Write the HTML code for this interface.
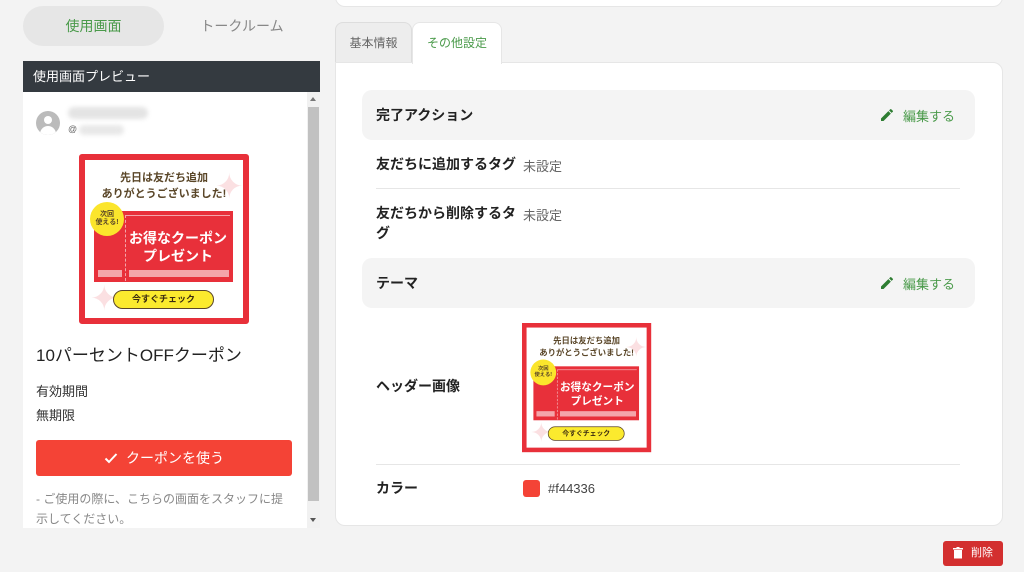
<!DOCTYPE html>
<html><head><meta charset="utf-8">
<style>
*{box-sizing:border-box;margin:0;padding:0}
body{width:1024px;height:572px;overflow:hidden;background:#f3f3f3;font-family:"Liberation Sans","Noto Sans CJK JP",sans-serif;color:#333;position:relative}
.abs{position:absolute}
.cp{position:absolute;width:170px;height:170px;background:#fff;border:6px solid #e8303a;border-radius:3px;overflow:hidden;transform-origin:0 0}
.cp .t{position:absolute;left:0;width:158px;text-align:center;font-weight:bold;color:#5a4628;font-size:11px;line-height:13px}
.cp .band{position:absolute;left:9px;top:51px;width:139px;height:71px;background:#e8303a}
.cp .big{position:absolute;left:38px;width:110px;text-align:center;color:#fff;font-weight:bold;font-size:14px;line-height:16px}
.cp .strip{position:absolute;top:110px;height:7px;background:#f4a5aa}
.cp .btn{position:absolute;left:28px;top:130px;width:101px;height:19px;background:#fbea2e;border:1.5px solid #5a4628;border-radius:10px;text-align:center;font-size:9px;font-weight:bold;line-height:16px;color:#3a2a10}
.cp .badge{position:absolute;left:5px;top:42px;width:34px;height:34px;background:#fbe52c;border-radius:50%;font-size:7px;line-height:8px;text-align:center;font-weight:bold;color:#5a4628;padding-top:9px}
.cp .sp{position:absolute;color:#fbe0e2;font-size:34px;line-height:34px}
.sec{position:absolute;left:362px;width:613px;height:50px;background:#f4f4f4;border-radius:10px}
.sec b{position:absolute;left:14px;top:15px;font-size:14px;color:#222}
.edit{position:absolute;right:20px;top:16px;font-size:13px;color:#4a9a4a}
.edit svg{position:absolute;left:-24px;top:1px}
.lbl{position:absolute;font-size:14px;font-weight:bold;color:#222;line-height:20px}
.val{position:absolute;font-size:13px;color:#666}
</style></head><body>

<div class="abs" style="left:23px;top:6px;width:141px;height:40px;background:#e6e6e6;border-radius:20px;text-align:center;line-height:40px;font-size:14px;color:#4a9a4a">使用画面</div>
<div class="abs" style="left:164px;top:6px;width:156px;height:40px;text-align:center;line-height:40px;font-size:14px;color:#888">トークルーム</div>

<div class="abs" style="left:23px;top:61px;width:297px;height:31px;background:#343a40;color:#fff;font-size:13px;line-height:31px;padding-left:10px">使用画面プレビュー</div>
<div class="abs" style="left:23px;top:92px;width:297px;height:436px;background:#fff;overflow:hidden">
  <div class="abs" style="left:284px;top:0;width:13px;height:436px;background:#f1f1f1"></div>
  <div class="abs" style="left:285px;top:15px;width:11px;height:394px;background:#c1c1c1"></div>
  <div class="abs" style="left:287px;top:5px;width:0;height:0;border-left:3px solid transparent;border-right:3px solid transparent;border-bottom:4px solid #777"></div>
  <div class="abs" style="left:287px;top:426px;width:0;height:0;border-left:3px solid transparent;border-right:3px solid transparent;border-top:4px solid #555"></div>
  <div class="abs" style="left:13px;top:19px;width:24px;height:24px;border-radius:50%;background:#bbb;overflow:hidden">
    <div class="abs" style="left:8px;top:5px;width:8px;height:8px;border-radius:50%;background:#fff"></div>
    <div class="abs" style="left:4px;top:15px;width:16px;height:10px;border-radius:8px 8px 0 0;background:#fff"></div>
  </div>
  <div class="abs" style="left:45px;top:15px;width:80px;height:12px;border-radius:6px;background:#e4e4e4;filter:blur(2px)"></div>
  <div class="abs" style="left:45px;top:32px;font-size:9px;color:#666">@</div>
  <div class="abs" style="left:56px;top:33px;width:45px;height:10px;border-radius:5px;background:#e8e8e8;filter:blur(2px)"></div>
  <div class="abs" style="left:13px;top:249px;font-size:17px;color:#222">10パーセントOFFクーポン</div>
  <div class="abs" style="left:13px;top:289px;font-size:13px;color:#333">有効期間</div>
  <div class="abs" style="left:13px;top:313px;font-size:13px;color:#333">無期限</div>
  <div class="abs" style="left:13px;top:348px;width:256px;height:36px;background:#f44336;border-radius:3px;color:#fff;font-size:14px;text-align:center;line-height:36px">
    <svg width="14" height="12" viewBox="0 0 14 12" style="vertical-align:-1px;margin-right:8px"><path d="M1.5 6.5l3.5 3.5 7.5-8" stroke="#fff" stroke-width="2" fill="none"/></svg>クーポンを使う</div>
  <div class="abs" style="left:13px;top:397px;width:252px;font-size:12px;color:#888;line-height:20px">- ご使用の際に、こちらの画面をスタッフに提示してください。</div>
</div>

<div class="cp" style="left:79px;top:154px">
  <div class="sp" style="left:130px;top:10px">✦</div>
  <div class="sp" style="left:5px;top:122px">✦</div>
  <div class="t" style="top:12px">先日は友だち追加</div>
  <div class="t" style="top:28px">ありがとうございました!</div>
  <div class="band"></div>
  <div class="abs" style="left:41px;top:55px;width:104px;height:1px;background:#f4a5aa"></div>
  <div class="abs" style="left:40px;top:55px;width:0;height:66px;border-left:1px dashed #f4a5aa"></div>
  <div class="big" style="top:70px">お得なクーポン</div>
  <div class="big" style="top:88px">プレゼント</div>
  <div class="strip" style="left:13px;width:24px"></div>
  <div class="strip" style="left:44px;width:100px"></div>
  <div class="badge">次回<br>使える!</div>
  <div class="btn">今すぐチェック</div>
</div>

<div class="abs" style="left:335px;top:-10px;width:668px;height:17px;background:#fff;border-radius:0 0 10px 10px;border:1px solid #e6e6e6"></div>
<div class="abs" style="left:335px;top:22px;width:77px;height:42px;background:#ededed;border:1px solid #ddd;border-radius:8px 8px 0 0;text-align:center;line-height:40px;font-size:12px;color:#666">基本情報</div>
<div class="abs" style="left:335px;top:62px;width:668px;height:464px;background:#fff;border:1px solid #e6e6e6;border-radius:0 10px 10px 10px"></div>
<div class="abs" style="left:412px;top:22px;width:90px;height:42px;background:#fff;border:1px solid #e6e6e6;border-bottom:none;border-radius:8px 8px 0 0;text-align:center;line-height:40px;font-size:12px;color:#4a9a4a">その他設定</div>

<div class="sec" style="top:90px"><b>完了アクション</b><div class="edit"><svg width="16" height="16" viewBox="0 0 24 24"><path d="M3 17.25V21h3.75L17.8 9.94l-3.750-3.75L3 17.25zM20.7 7.04a1 1 0 000-1.41l-2.34-2.34a1 1 0 00-1.41 0l-1.83 1.83 3.75 3.75 1.83-1.83z" fill="#2e7d32"/></svg>編集する</div></div>
<div class="lbl" style="left:376px;top:154px">友だちに追加するタグ</div>
<div class="val" style="left:523px;top:156px">未設定</div>
<div class="abs" style="left:376px;top:188px;width:584px;height:1px;background:#e6e6e6"></div>
<div class="lbl" style="left:376px;top:203px;width:140px">友だちから削除するタグ</div>
<div class="val" style="left:523px;top:205px">未設定</div>

<div class="sec" style="top:258px"><b>テーマ</b><div class="edit"><svg width="16" height="16" viewBox="0 0 24 24"><path d="M3 17.25V21h3.75L17.8 9.94l-3.75-3.75L3 17.25zM20.7 7.04a1 1 0 000-1.41l-2.34-2.34a1 1 0 00-1.41 0l-1.83 1.83 3.75 3.75 1.83-1.83z" fill="#2e7d32"/></svg>編集する</div></div>
<div class="lbl" style="left:376px;top:376px">ヘッダー画像</div>

<div class="cp" style="left:522px;top:323px;transform:scale(0.76);border-radius:0">
  <div class="sp" style="left:130px;top:10px">✦</div>
  <div class="sp" style="left:5px;top:122px">✦</div>
  <div class="t" style="top:12px">先日は友だち追加</div>
  <div class="t" style="top:28px">ありがとうございました!</div>
  <div class="band"></div>
  <div class="abs" style="left:41px;top:55px;width:104px;height:1px;background:#f4a5aa"></div>
  <div class="abs" style="left:40px;top:55px;width:0;height:66px;border-left:1px dashed #f4a5aa"></div>
  <div class="big" style="top:70px">お得なクーポン</div>
  <div class="big" style="top:88px">プレゼント</div>
  <div class="strip" style="left:13px;width:24px"></div>
  <div class="strip" style="left:44px;width:100px"></div>
  <div class="badge">次回<br>使える!</div>
  <div class="btn">今すぐチェック</div>
</div>

<div class="abs" style="left:376px;top:464px;width:584px;height:1px;background:#e6e6e6"></div>
<div class="lbl" style="left:376px;top:478px">カラー</div>
<div class="abs" style="left:523px;top:480px;width:17px;height:17px;background:#f44336;border-radius:3px"></div>
<div class="val" style="left:548px;top:481px;color:#444">#f44336</div>

<div class="abs" style="left:943px;top:541px;width:60px;height:25px;background:#d32f2f;border-radius:3px;color:#fff;font-size:11px;line-height:25px;padding-left:28px">
  <svg width="10" height="12" viewBox="0 0 10 12" style="position:absolute;left:10px;top:6px"><path d="M1 3h8v8.5H1zM0 1h10v1.5H0zM3.5 0h3v1h-3z" fill="#fff"/></svg>削除</div>
</body></html>
